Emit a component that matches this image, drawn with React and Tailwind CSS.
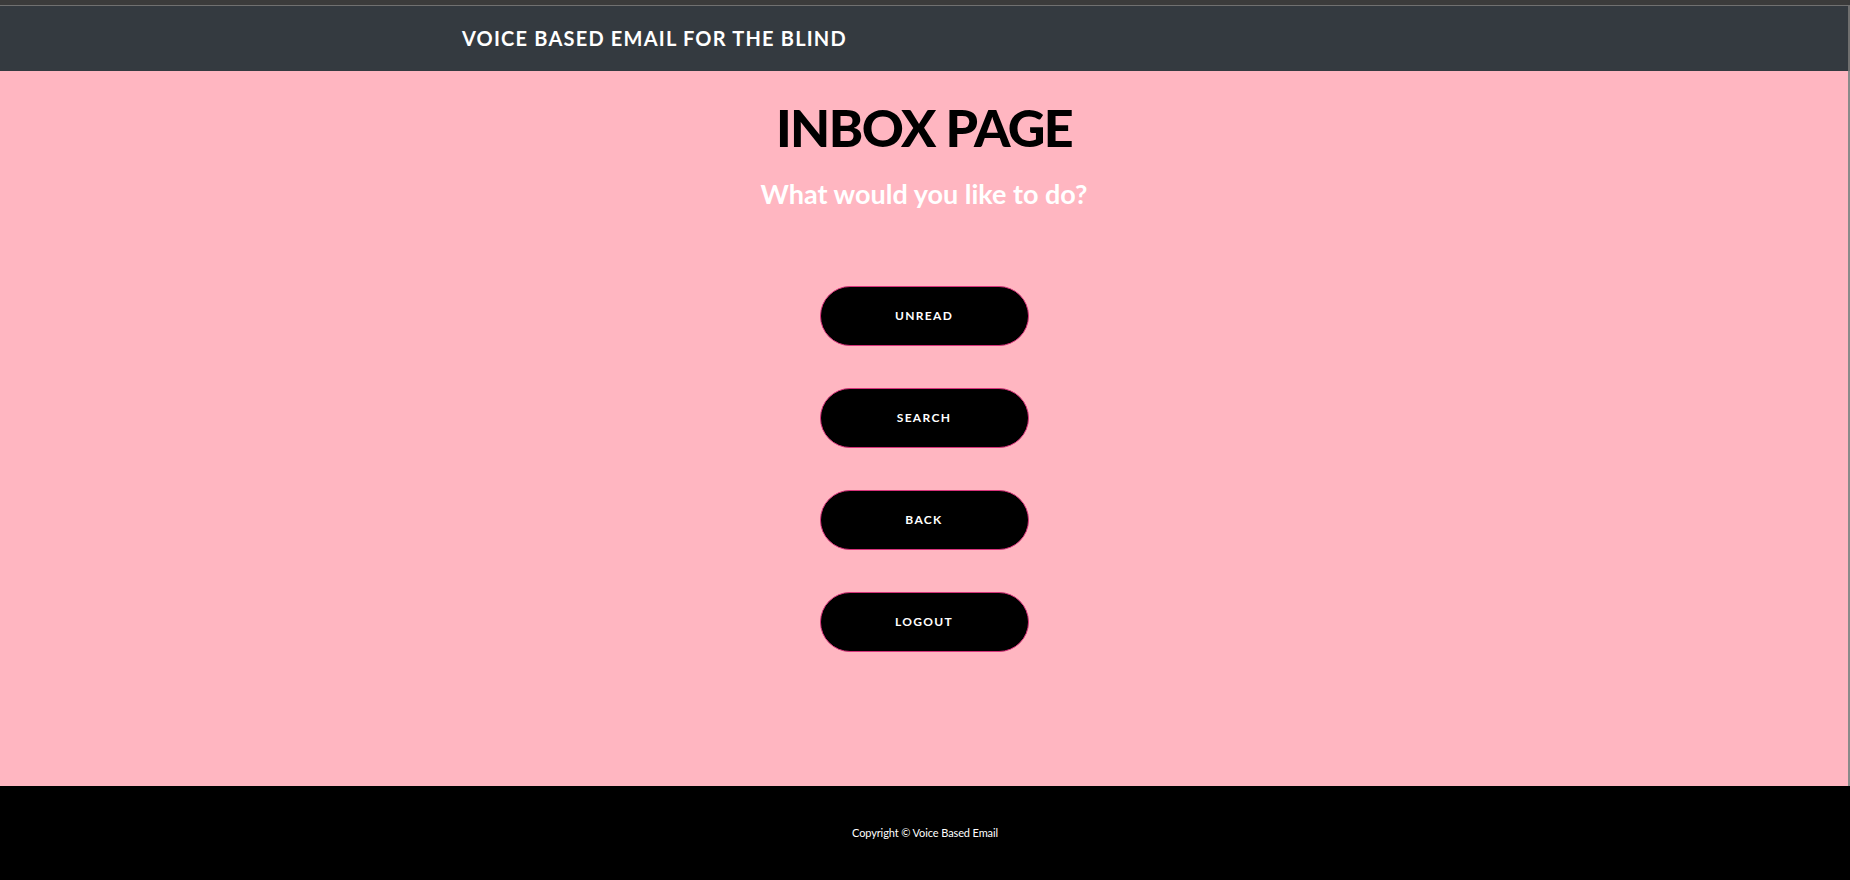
export default function App() {
  const buttons = ["UNREAD", "SEARCH", "BACK", "LOGOUT"];
  return (
    <div className="w-[1850px] h-[880px] flex flex-col bg-[#ffb6c1]" style={{ fontFamily: "Lato, 'Open Sans', sans-serif" }}>
      <div className="h-[5px] bg-[#3b3b3b]" />
      <div className="h-px bg-[#707070]" />
      <header className="h-[65px] bg-[#343a40] flex items-center pl-[462px] border-r-2 border-[#6f6f6f]">
        <span className="text-white text-[20px] font-bold tracking-[0.06em] -mt-[2px]">VOICE BASED EMAIL FOR THE BLIND</span>
      </header>
      <main className="flex-1 flex flex-col items-center border-r-2 border-[#8a8a8a]">
        <h1 className="mt-[25px] text-[52px] leading-[1.2] font-black text-black tracking-[-0.03em]">INBOX PAGE</h1>
        <h2 className="mt-[20px] text-[27px] leading-[1.2] font-bold text-white">What would you like to do?</h2>
        <div className="mt-[75px] flex flex-col gap-[42px]">
          {buttons.map((b) => (
            <button
              key={b}
              className="w-[209px] h-[60px] rounded-full bg-black border border-[#d6337a] text-white text-[12px] font-bold tracking-[0.11em]"
            >
              {b}
            </button>
          ))}
        </div>
      </main>
      <footer className="h-[94px] bg-black flex items-center justify-center">
        <span className="text-white text-[11px] tracking-[-0.01em]">Copyright © Voice Based Email</span>
      </footer>
    </div>
  );
}
